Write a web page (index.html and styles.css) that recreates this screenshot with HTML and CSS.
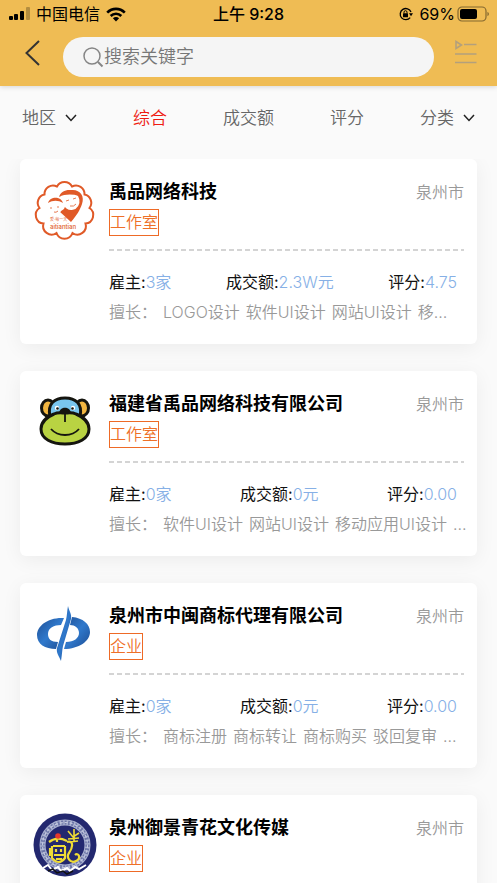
FILE: index.html
```html
<!DOCTYPE html>
<html lang="zh-CN">
<head>
<meta charset="utf-8">
<meta name="viewport" content="width=device-width, initial-scale=1">
<title>综合</title>
<link rel="stylesheet" href="styles.css">
</head>
<body>
<div class="app">
  <header class="header">
    <div class="status">
      <div class="status-left">
        <svg width="22" height="14" viewBox="0 0 22 14" aria-hidden="true">
          <rect x="1" y="9" width="4" height="4" rx="1"/>
          <rect x="6" y="7" width="4" height="6" rx="1"/>
          <rect x="12" y="4" width="4" height="9" rx="1"/>
          <rect x="18" y="0" width="4" height="13" rx="1" opacity=".25"/>
        </svg>
        <span>中国电信</span>
        <svg width="20" height="15" viewBox="0 0 20 15" aria-hidden="true">
          <g fill="none" stroke="#000" stroke-width="2.6">
            <path d="M1.2 5.6C6.200 .6 13.800 .6 18.800 5.600"/>
            <path d="M4.700 9C7.700 6 12.300 6 15.300 9"/>
          </g>
          <path d="M6.900 11.200c1.800-1.500 4.400-1.500 6.200 0L10 14.500z"/>
        </svg>
      </div>
      <div class="status-time">上午 9:28</div>
      <div class="status-right">
        <svg width="14" height="14" viewBox="0 0 14 14" aria-hidden="true">
          <path d="M11.200 10.600A5.600 5.600 0 1 1 12 5" fill="none" stroke="#000" stroke-width="1.300"/>
          <path d="M10 6.200h4l-2 3z"/>
          <rect x="4" y="6.200" width="5" height="4" rx=".5"/>
          <path d="M5 6.500V5.200a1.500 1.500 0 0 1 3 0v1.300" fill="none" stroke="#000"/>
        </svg>
        <span class="percent">69%</span>
        <svg width="32" height="16" viewBox="0 0 32 16" aria-hidden="true">
          <rect x="1" y="1" width="28" height="14" rx="4" fill="none" stroke="#000" stroke-opacity=".45" stroke-width="1.200"/>
          <rect x="3" y="3" width="17" height="10" rx="2"/>
          <path d="M30.500 6c1.700.5 1.700 3.500 0 4z" opacity=".5"/>
        </svg>
      </div>
    </div>
    <div class="toolbar">
      <button class="icon-button back" type="button" aria-label="返回">
        <svg width="16" height="28" viewBox="0 0 16 28"><path d="M15 3 2.500 15 15 27" fill="none" stroke="#333" stroke-width="2"/></svg>
      </button>
      <label class="search">
        <svg width="21" height="21" viewBox="0 0 21 21" aria-hidden="true"><g fill="none" stroke="#858585" stroke-width="1.500"><circle cx="9" cy="9" r="8"/><path d="m15 15 4.500 4.500" stroke-width="2"/></g></svg>
        <input class="search-input" type="text" placeholder="搜索关键字" aria-label="搜索关键字">
      </label>
      <button class="icon-button menu" type="button" aria-label="菜单">
        <svg width="22" height="24" viewBox="0 0 22 24"><g fill="none" stroke="#b3a07c" stroke-width="1.600"><path d="M1 1.500v7l5.500-3.500z"/><path d="M9 4.500h12.500M0 14h21.500M0 22.500h21.500"/></g></svg>
      </button>
    </div>
  </header>

  <nav class="tabs">
    <button class="tab" type="button">地区<svg class="caret" width="12" height="8" viewBox="0 0 12 8" aria-hidden="true"><path d="m1 1 5 5.500L11 1"/></svg></button>
    <button class="tab active" type="button">综合</button>
    <button class="tab" type="button">成交额</button>
    <button class="tab" type="button">评分</button>
    <button class="tab" type="button">分类<svg class="caret" width="12" height="8" viewBox="0 0 12 8" aria-hidden="true"><path d="m1 1 5 5.500L11 1"/></svg></button>
  </nav>

  <main class="list">
    <article class="card">
      <svg class="logo" viewBox="0 0 64 64" aria-hidden="true">
        <path d="M24 9.500A8.500 8.500 0 0 1 39 9.500A8.500 8.500 0 0 1 51.500 17.500A8.500 8.500 0 0 1 56.500 31A8.500 8.500 0 0 1 52.500 46.500A8.500 8.500 0 0 1 39.500 56A8.500 8.500 0 0 1 23.500 56A8.500 8.500 0 0 1 10.500 46.500A8.500 8.500 0 0 1 6.500 31A8.500 8.500 0 0 1 11.500 17.500A8.500 8.500 0 0 1 24 9.500Z" fill="#fff" stroke="#e05a28" stroke-width="2"/>
        <path d="M38 13c9-1 14 6 11 14-2 6-5 11-11 18-4-4-8-7-12-11 5 0 7-4 6-9z" fill="#e05a28"/>
        <ellipse cx="38" cy="24" rx="8.500" ry="9" fill="#fff" transform="rotate(-12 38 24)"/>
        <path d="M26 20c2-8 16-10 20-1-7-2-14-2-20 1z" fill="#e05a28"/>
        <ellipse cx="23" cy="29" rx="7" ry="7.500" fill="#fff"/>
        <path d="M15 26c2-7 13-7 15 0-5-3-10-3-15 0z" fill="#e05a28"/>
        <path d="M18 30v2M25 29v2M21 35q2 1 4-1M33 24l3-1M40 22l3-1M37 29q4 1 6-2" fill="none" stroke="#e05a28" stroke-width=".8"/>
        <text x="17" y="44" class="logo-caption">爱·每一天</text>
        <text x="17" y="52" class="logo-word">aitiantian</text>
      </svg>
      <div class="card-body">
        <div class="card-head"><h2 class="name">禹品网络科技</h2><span class="city">泉州市</span></div>
        <span class="tag">工作室</span>
        <hr class="divider">
        <div class="stats">
          <span>雇主:<b>3家</b></span><span>成交额:<b>2.3W元</b></span><span>评分:<b>4.75</b></span>
        </div>
        <p class="skills"><span>擅长：</span><span>LOGO设计</span><span>软件UI设计</span><span>网站UI设计</span><span>移…</span></p>
      </div>
    </article>

    <article class="card">
      <svg class="logo" viewBox="0 0 64 64" aria-hidden="true">
        <g stroke="#15150f" stroke-width="3">
          <ellipse cx="15" cy="19" rx="6.500" ry="8" fill="#f2b640"/>
          <ellipse cx="49" cy="19" rx="6.500" ry="8" fill="#f2b640"/>
          <path d="M17 28C14 14 22 9 32 9s18 5 15 19z" fill="#79c6ee"/>
          <path d="M32 24c-3 0-7-1-11 1-7 3-13 8-13 15 0 10 11 15 24 15s24-5 24-15c0-7-6-12-13-15-4-2-8-1-11-1z" fill="#b9d342"/>
        </g>
        <path d="M26 24c1-7 11-7 12 0z" fill="#15150f"/>
        <path d="M32 24v9M18 40c7 8 21 8 28 0" fill="none" stroke="#15150f" stroke-width="1.800"/>
        <g fill="#fff"><circle cx="24" cy="19" r="2.200"/><circle cx="40" cy="19" r="2.200"/></g>
        <g fill="#15150f"><circle cx="24.500" cy="19.500" r="1.300"/><circle cx="39.500" cy="19.500" r="1.300"/></g>
      </svg>
      <div class="card-body">
        <div class="card-head"><h2 class="name">福建省禹品网络科技有限公司</h2><span class="city">泉州市</span></div>
        <span class="tag">工作室</span>
        <hr class="divider">
        <div class="stats">
          <span>雇主:<b>0家</b></span><span>成交额:<b>0元</b></span><span>评分:<b>0.00</b></span>
        </div>
        <p class="skills"><span>擅长：</span><span>软件UI设计</span><span>网站UI设计</span><span>移动应用UI设计</span><span>…</span></p>
      </div>
    </article>

    <article class="card">
      <svg class="logo" viewBox="0 0 64 64" aria-hidden="true">
        <defs><linearGradient id="blue" x2="1" y2="1"><stop stop-color="#1f4f94"/><stop offset=".5" stop-color="#3079cc"/><stop offset="1" stop-color="#1d4c92"/></linearGradient></defs>
        <g fill="url(#blue)">
          <path d="M31 17C15 16 4 25 4 34c0 9 8 14 19 14l2-7c-7 0-10-3-10-8 0-6 6-9 13-9z"/>
          <path d="M39 16c11 1 18 7 18 15 0 9-11 17-26 17l2-7c8 0 13-4 13-9 0-5-4-8-9-8z"/>
          <path d="M35 5c1 5 4 8 3 13l-8 27c-1 5-1 9-2 15-2-5-5-8-4-13l9-28c1-4 1-9 2-14z"/>
        </g>
      </svg>
      <div class="card-body">
        <div class="card-head"><h2 class="name">泉州市中闽商标代理有限公司</h2><span class="city">泉州市</span></div>
        <span class="tag">企业</span>
        <hr class="divider">
        <div class="stats">
          <span>雇主:<b>0家</b></span><span>成交额:<b>0元</b></span><span>评分:<b>0.00</b></span>
        </div>
        <p class="skills"><span>擅长：</span><span>商标注册</span><span>商标转让</span><span>商标购买</span><span>驳回复审</span><span>…</span></p>
      </div>
    </article>

    <article class="card">
      <svg class="logo" viewBox="0 0 64 64" aria-hidden="true">
        <circle cx="32" cy="32" r="31.500" fill="#23286f"/>
        <circle cx="32" cy="32" r="22.500" fill="none" stroke="#a9b0cf" stroke-width="6"/>
        <circle cx="32" cy="32" r="22.500" fill="none" stroke="#6d76a8" stroke-width="4" stroke-dasharray="2 1.500"/>
        <circle cx="32" cy="32" r="22.500" fill="none" stroke="#c3c8de" stroke-width="1.200" stroke-dasharray="3 2"/>
        <g fill="none" stroke="#f0dc35" stroke-width="2.200">
          <path d="M16 29q8-6 18-1M20 33h12M19 33v12q7 8 13 0V33M23 36v3M28 36v3M21 42h10M17 35v8M24 29v-3M23 46h6"/>
          <path d="M34 29c8-2 5 7 2 11s1 11 7 8 2-9-1-6"/>
          <path d="M35 18l5 6 6-4M35 26l11-1M41 16v12M37 29l8-1" stroke-width="1.600"/>
        </g>
        <circle cx="25" cy="23" r="2.800" fill="#e6392b"/>
        <path d="M10 55l5-3 4 5 6-3 3 4 6-3 3 3 5-4 4 2 7-4" fill="none" stroke="#fff" stroke-width="2"/>
        <path d="M15 58l5-2 4 4 6-2 4 3 6-3" fill="none" stroke="#111" stroke-width="1.500"/>
      </svg>
      <div class="card-body">
        <div class="card-head"><h2 class="name">泉州御景青花文化传媒</h2><span class="city">泉州市</span></div>
        <span class="tag">企业</span>
      </div>
    </article>
  </main>
</div>
</body>
</html>
```
FILE: styles.css
```css
* {
  box-sizing: border-box;
}

body {
  margin: 0;
  background: #fafafa;
  color: #111;
  font-family: Inter, "Noto Sans CJK SC", sans-serif;
  font-size: 16px;
  line-height: 24px;
}

button,
input {
  padding: 0;
  border: 0;
  background: none;
  color: inherit;
  font: inherit;
}

svg {
  display: block;
  flex: none;
}

.app {
  display: flex;
  flex-direction: column;
  height: 100vh;
}

.header {
  flex: none;
  padding-bottom: 9px;
  background: #efbc54;
  box-shadow: 0 1px 5px rgba(0, 0, 0, 0.15);
}

.status {
  display: grid;
  grid-template-columns: 1fr auto 1fr;
  align-items: center;
  height: 28px;
  padding: 0 8px;
  color: #000;
}

.status-left,
.status-right {
  display: flex;
  align-items: center;
  gap: 6px;
}

.status-right {
  justify-content: flex-end;
}

.percent {
  margin-right: -4px;
}

.status-time {
  font-weight: 500;
}

.toolbar {
  display: flex;
  align-items: center;
  padding: 9px 20px 0 24px;
}

.icon-button {
  flex: none;
  margin-bottom: 10px;
}

.search {
  display: flex;
  flex: 1;
  align-items: center;
  min-width: 0;
  height: 40px;
  margin: 0 21px 0 23px;
  padding: 0 20px;
  border-radius: 20px;
  background: #f5f5f5;
}

.search-input {
  flex: 1;
  min-width: 0;
  outline: 0;
  font-size: 18px;
  font-weight: 350;
}

.search-input::placeholder {
  color: #777;
  opacity: 1;
}

.tabs {
  display: flex;
  flex: none;
  justify-content: space-between;
  padding: 20px 22px 29px;
  color: #666;
  font-size: 17px;
  font-weight: 350;
}

.tab {
  display: flex;
  align-items: center;
  gap: 9px;
}

.active {
  color: #ee1b12;
}

.caret {
  fill: none;
  stroke: #222;
  stroke-width: 1.5;
}

.list {
  display: flex;
  flex: 1;
  flex-direction: column;
  gap: 27px;
  min-height: 0;
  padding: 0 20px;
  overflow: hidden auto;
  scrollbar-width: none;
}

.card {
  display: flex;
  flex: none;
  gap: 12px;
  padding: 18px 13px 20px;
  border-radius: 6px;
  background: #fff;
  box-shadow: 0 4px 20px rgba(0, 0, 0, 0.06);
}

.logo {
  width: 64px;
  height: 64px;
}

.logo-caption {
  fill: #e05a28;
  font-size: 4px;
}

.logo-word {
  fill: #e05a28;
  font-size: 6px;
  font-weight: 500;
}

.card-body {
  flex: 1;
  min-width: 0;
  padding-top: 3px;
}

.card-head {
  display: flex;
  justify-content: space-between;
}

.name {
  margin: 0;
  color: #000;
  font-size: 18px;
  font-weight: 600;
}

.city {
  color: #999;
  font-weight: 350;
}

.tag {
  display: block;
  width: fit-content;
  margin-top: 5px;
  border: 1px solid #ee6a26;
  color: #ee7028;
  font-weight: 350;
  line-height: 25px;
}

.divider {
  height: 2px;
  margin: 13px 0 19px;
  border: 0;
  background: repeating-linear-gradient(90deg, #d4d4d4 0 5px, transparent 5px 8px);
}

.stats {
  display: flex;
  justify-content: space-between;
  padding-right: 7px;
}

.stats b {
  color: #86b0e6;
  font-weight: 350;
}

.skills {
  display: flex;
  gap: 6px;
  margin: 6px 0 0;
  color: #999;
  font-weight: 350;
  white-space: nowrap;
}
```
